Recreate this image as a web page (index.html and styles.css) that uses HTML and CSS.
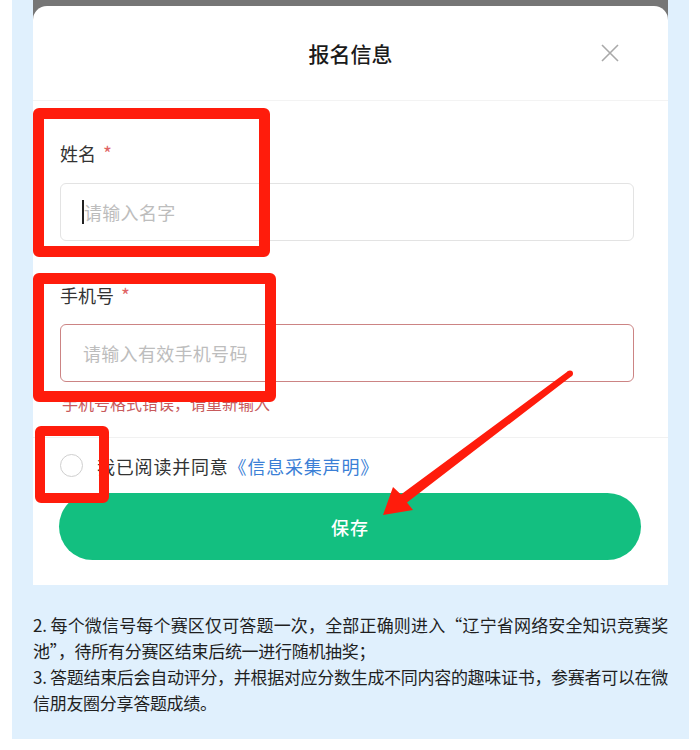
FILE: index.html
```html
<!DOCTYPE html>
<html lang="zh-CN">
<head>
<meta charset="utf-8">
<title>报名信息</title>
<link rel="stylesheet" href="styles.css">
</head>
<body>
<div class="page">
  <div class="mask">
    <div class="modal">
      <div class="modal-head">
        <span></span>
        <h2 class="title">报名信息</h2>
        <span class="close">
          <svg width="18" height="18" viewBox="0 0 18 18"><path d="M1 1 L17 17 M17 1 L1 17" stroke="#a9a9a9" stroke-width="1.6" fill="none"/></svg>
        </span>
      </div>
      <div class="form">
        <div class="field">
          <div class="label">姓名<span class="req">*</span></div>
          <div class="input"><span class="caret"></span><span class="ph">请输入名字</span></div>
        </div>
        <div class="field second">
          <div class="label">手机号<span class="req">*</span></div>
          <div class="input error"><span class="ph">请输入有效手机号码</span></div>
          <div class="err">手机号格式错误，请重新输入</div>
        </div>
      </div>
      <div class="agree">
        <span class="radio"></span>
        <span class="agree-text">我已阅读并同意<span class="link">《信息采集声明》</span></span>
      </div>
      <div class="actions">
        <button class="save">保存</button>
      </div>
    </div>
  </div>
  <div class="rules">
    <p>2. 每个微信号每个赛区仅可答题一次，全部正确则进入“辽宁省网络安全知识竞赛奖池”，待所有分赛区结束后统一进行随机抽奖；</p>
    <p>3. 答题结束后会自动评分，并根据对应分数生成不同内容的趣味证书，参赛者可以在微信朋友圈分享答题成绩。</p>
  </div>

  <div class="mark mark-name"></div>
  <div class="mark mark-phone"></div>
  <div class="mark mark-radio"></div>
  <svg class="arrow" width="700" height="750" viewBox="0 0 700 750">
    <circle cx="570" cy="373.5" r="3" fill="#ff1c0c"/>
    <polygon fill="#ff1c0c" points="571.8,375.9 568.2,371.1 401.0,494.5 393,487 383,515 413,510 407.0,502.5"/>
  </svg>
</div>
</body>
</html>
```
FILE: styles.css
```css
* { box-sizing: border-box; }
html, body { margin: 0; padding: 0; background: #ffffff; }
body {
  font-family: "Noto Sans CJK SC", "Noto Sans", sans-serif;
  color: #222;
}
.page {
  position: relative;
  margin-left: 12px;
  width: 677px;
  background: #e0f0fd;
  padding-bottom: 23px;
}
.mask {
  margin: 0 21px;
  padding-top: 6px;
  background: #767676;
}
.modal {
  background: #ffffff;
  border-radius: 14px 14px 0 0;
}
.modal-head {
  height: 95px;
  border-bottom: 1px solid #f3f3f3;
  display: grid;
  grid-template-columns: 1fr auto 1fr;
  align-items: center;
}
.title {
  margin: 0;
  font-size: 21px;
  font-weight: 500;
  color: #1a1a1a;
  line-height: 30px;
}
.close {
  justify-self: end;
  margin-right: 49px;
  width: 18px;
  height: 18px;
  display: flex;
}
.form {
  padding: 39px 34px 0 27px;
}
.field.second { margin-top: 41px; }
.label {
  font-size: 18px;
  line-height: 26px;
  color: #333;
}
.req {
  color: #e06464;
  font-size: 19px;
  margin-left: 7px;
  vertical-align: top;
}
.input {
  margin-top: 17px;
  height: 58px;
  border: 1px solid #e3e3e3;
  border-radius: 6px;
  display: flex;
  align-items: center;
  padding-left: 21px;
  font-size: 18px;
  letter-spacing: 0.3px;
}
.input.error {
  margin-top: 16px;
  border-color: #cc8484;
  padding-left: 22px;
}
.caret {
  width: 2px;
  height: 24px;
  background: #222;
}
.ph { color: #bdbdbd; }
.err {
  margin-top: 10px;
  font-size: 16px;
  line-height: 22px;
  color: #c85a5c;
  padding-left: 2px;
}
.agree {
  margin-top: 23px;
  border-top: 1px solid #f1f1f1;
  height: 56px;
  display: flex;
  align-items: center;
  padding-left: 27px;
}
.radio {
  width: 23px;
  height: 23px;
  border: 1px solid #cfcfcf;
  border-radius: 50%;
  flex: none;
}
.agree-text {
  margin-left: 14px;
  font-size: 18px;
  letter-spacing: 0.8px;
  color: #333;
}
.link { color: #3b7fd6; }
.actions {
  padding: 0 27px 25px 26px;
}
.save {
  display: block;
  width: 582px;
  height: 67px;
  border: none;
  border-radius: 34px;
  background: #13bf80;
  color: #ffffff;
  font-family: "Noto Sans CJK SC", "Noto Sans", sans-serif;
  font-size: 18px;
  font-weight: 500;
  letter-spacing: 1px;
}
.rules {
  padding: 27px 21px 0;
  font-size: 17px;
  line-height: 26px;
  letter-spacing: -0.3px;
  text-align: justify;
  color: #1f1f1f;
}
.rules p { margin: 0; }
.mark {
  position: absolute;
  border: 11px solid #ff1c0c;
  border-radius: 6px;
}
.mark-name { left: 21px; top: 108px; width: 237px; height: 149px; }
.mark-phone { left: 21px; top: 273px; width: 243px; height: 129px; }
.mark-radio { left: 23px; top: 426px; width: 74px; height: 77px; border-width: 10px; }
.arrow {
  position: absolute;
  left: -12px;
  top: 0;
  pointer-events: none;
}
```
